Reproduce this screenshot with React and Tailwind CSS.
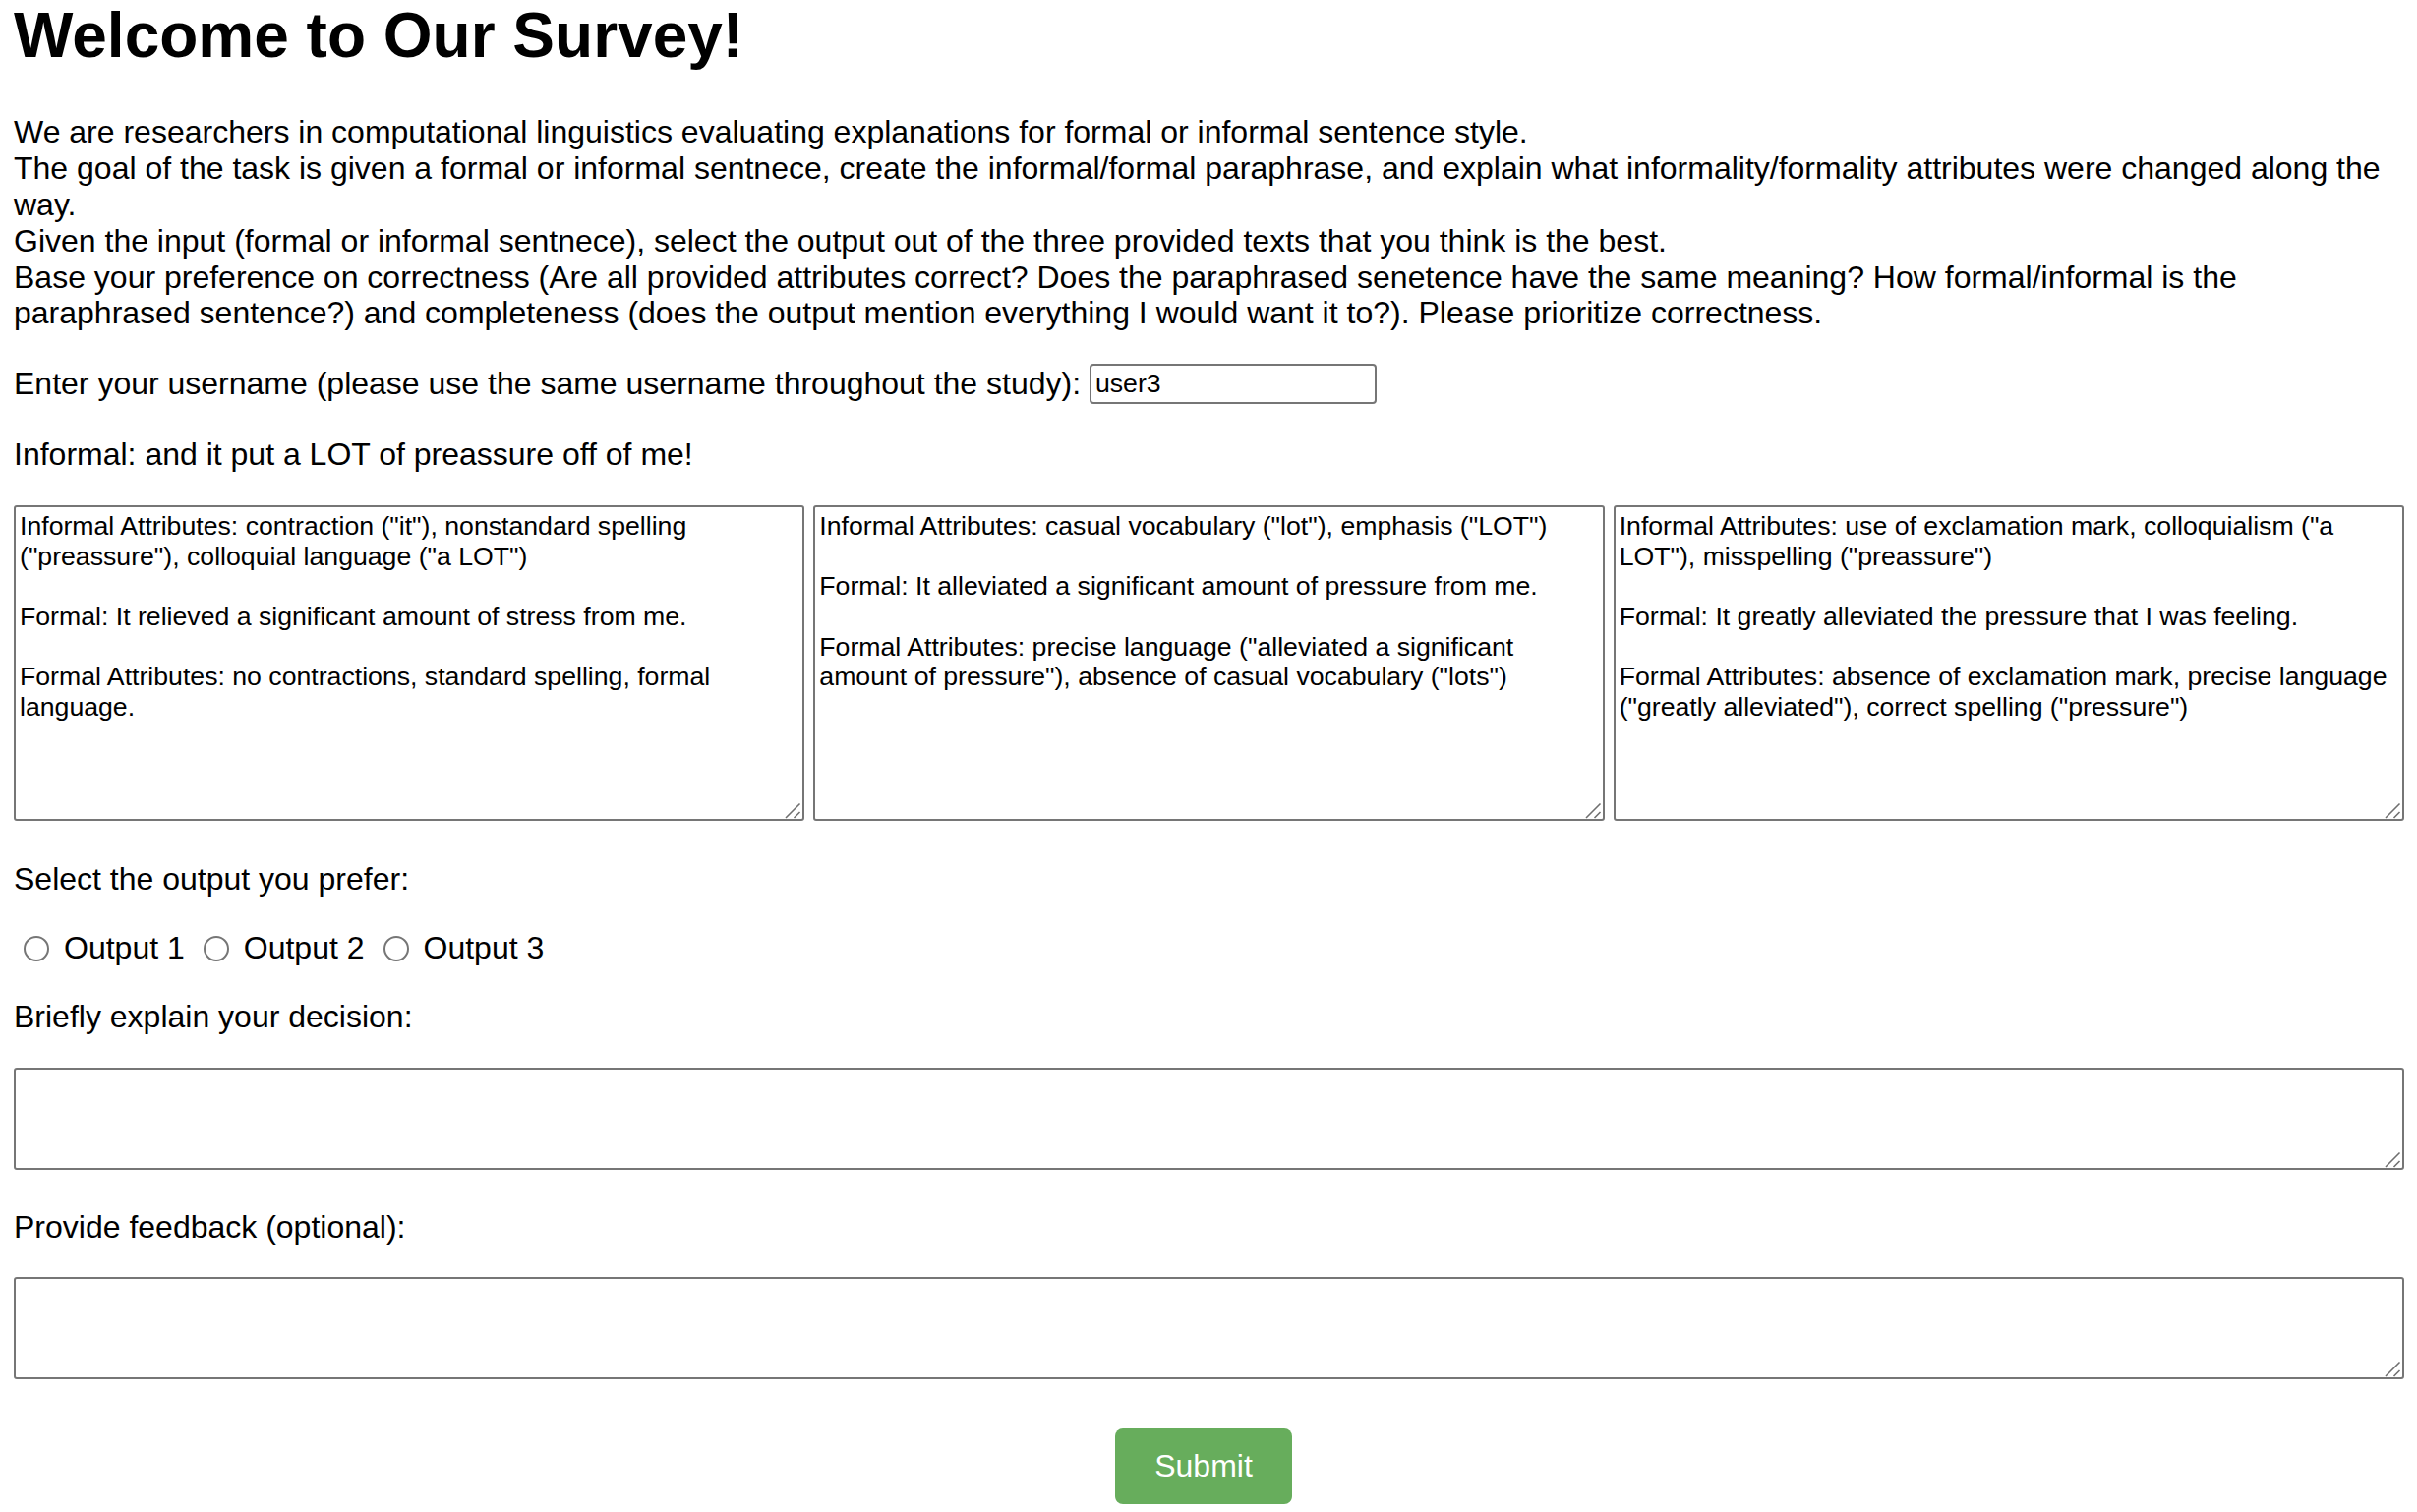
function Grip() {
  return (
    <svg className="absolute right-[2px] bottom-[2px] w-[18px] h-[18px] pointer-events-none" viewBox="0 0 18 18">
      <line x1="1" y1="17" x2="15.5" y2="2.5" stroke="#6f6f6f" strokeWidth="1.6" />
      <line x1="9.5" y1="17" x2="15.5" y2="11" stroke="#6f6f6f" strokeWidth="1.6" />
    </svg>
  );
}

function Box({ className, value }) {
  return (
    <div className={`relative ${className}`}>
      <textarea
        readOnly={value !== undefined}
        defaultValue={value}
        className="block w-full h-full border-2 border-[#767676] rounded-[3px] p-[4px] text-[26.67px] leading-[1.15] font-['Liberation_Sans',Arial,sans-serif] resize-none outline-none"
      />
      <Grip />
    </div>
  );
}

export default function App() {
  const outputs = [
    'Informal Attributes: contraction ("it"), nonstandard spelling ("preassure"), colloquial language ("a LOT")\n\nFormal: It relieved a significant amount of stress from me.\n\nFormal Attributes: no contractions, standard spelling, formal language.',
    'Informal Attributes: casual vocabulary ("lot"), emphasis ("LOT")\n\nFormal: It alleviated a significant amount of pressure from me.\n\nFormal Attributes: precise language ("alleviated a significant amount of pressure"), absence of casual vocabulary ("lots")',
    'Informal Attributes: use of exclamation mark, colloquialism ("a LOT"), misspelling ("preassure")\n\nFormal: It greatly alleviated the pressure that I was feeling.\n\nFormal Attributes: absence of exclamation mark, precise language ("greatly alleviated"), correct spelling ("pressure")',
  ];

  return (
    <div className="min-h-screen bg-white pl-[14px] pr-[13px] pb-[10px] text-black font-['Liberation_Sans',Arial,sans-serif] text-[32px] leading-[1.15]">
      <h1 className="text-[64px] font-bold leading-[1.15] mb-[42.8px]">Welcome to Our Survey!</h1>

      <p>
        We are researchers in computational linguistics evaluating explanations for formal or informal sentence style.<br />
        The goal of the task is given a formal or informal sentnece, create the informal/formal paraphrase, and explain what informality/formality attributes were changed along the way.<br />
        Given the input (formal or informal sentnece), select the output out of the three provided texts that you think is the best.<br />
        Base your preference on correctness (Are all provided attributes correct? Does the paraphrased senetence have the same meaning? How formal/informal is the paraphrased sentence?) and completeness (does the output mention everything I would want it to?). Please prioritize correctness.
      </p>

      <div className="mt-[32px] h-[43px] flex items-center">
        <label className="whitespace-pre">Enter your username (please use the same username throughout the study): </label>
        <input
          type="text"
          defaultValue="user3"
          className="w-[292px] h-[41px] border-2 border-[#767676] rounded-[4px] px-[4px] text-[26.67px] font-['Liberation_Sans',Arial,sans-serif] outline-none"
        />
      </div>

      <p className="mt-[32px]">Informal: and it put a LOT of preassure off of me!</p>

      {/* three candidate outputs */}
      <div className="mt-[33px] flex gap-[9px]">
        {outputs.map((text, i) => (
          <Box key={i} className="flex-1 h-[321px]" value={text} />
        ))}
      </div>

      <p className="mt-[41px]">Select the output you prefer:</p>

      <div className="mt-[33.5px] h-[37px] flex items-center">
        {[1, 2, 3].map((n) => (
          <div key={n} className="flex items-center">
            <input
              type="radio"
              name="choice"
              id={`o${n}`}
              className="appearance-none w-[26px] h-[26px] ml-[10px] mr-[6px] rounded-full border-2 border-[#767676] bg-white"
            />
            <label htmlFor={`o${n}`} className="px-[9px]">Output {n}</label>
          </div>
        ))}
      </div>

      <p className="mt-[32.5px]">Briefly explain your decision:</p>
      <Box className="mt-[33px] h-[104px]" />

      <p className="mt-[40.5px]">Provide feedback (optional):</p>
      <Box className="mt-[32px] h-[104px]" />

      <div className="mt-[50px] flex justify-center pr-[11px]">
        <button className="bg-[#67ad5c] text-white px-[40px] py-[20px] rounded-[8px] text-[32px] leading-[1.15]">Submit</button>
      </div>
    </div>
  );
}
